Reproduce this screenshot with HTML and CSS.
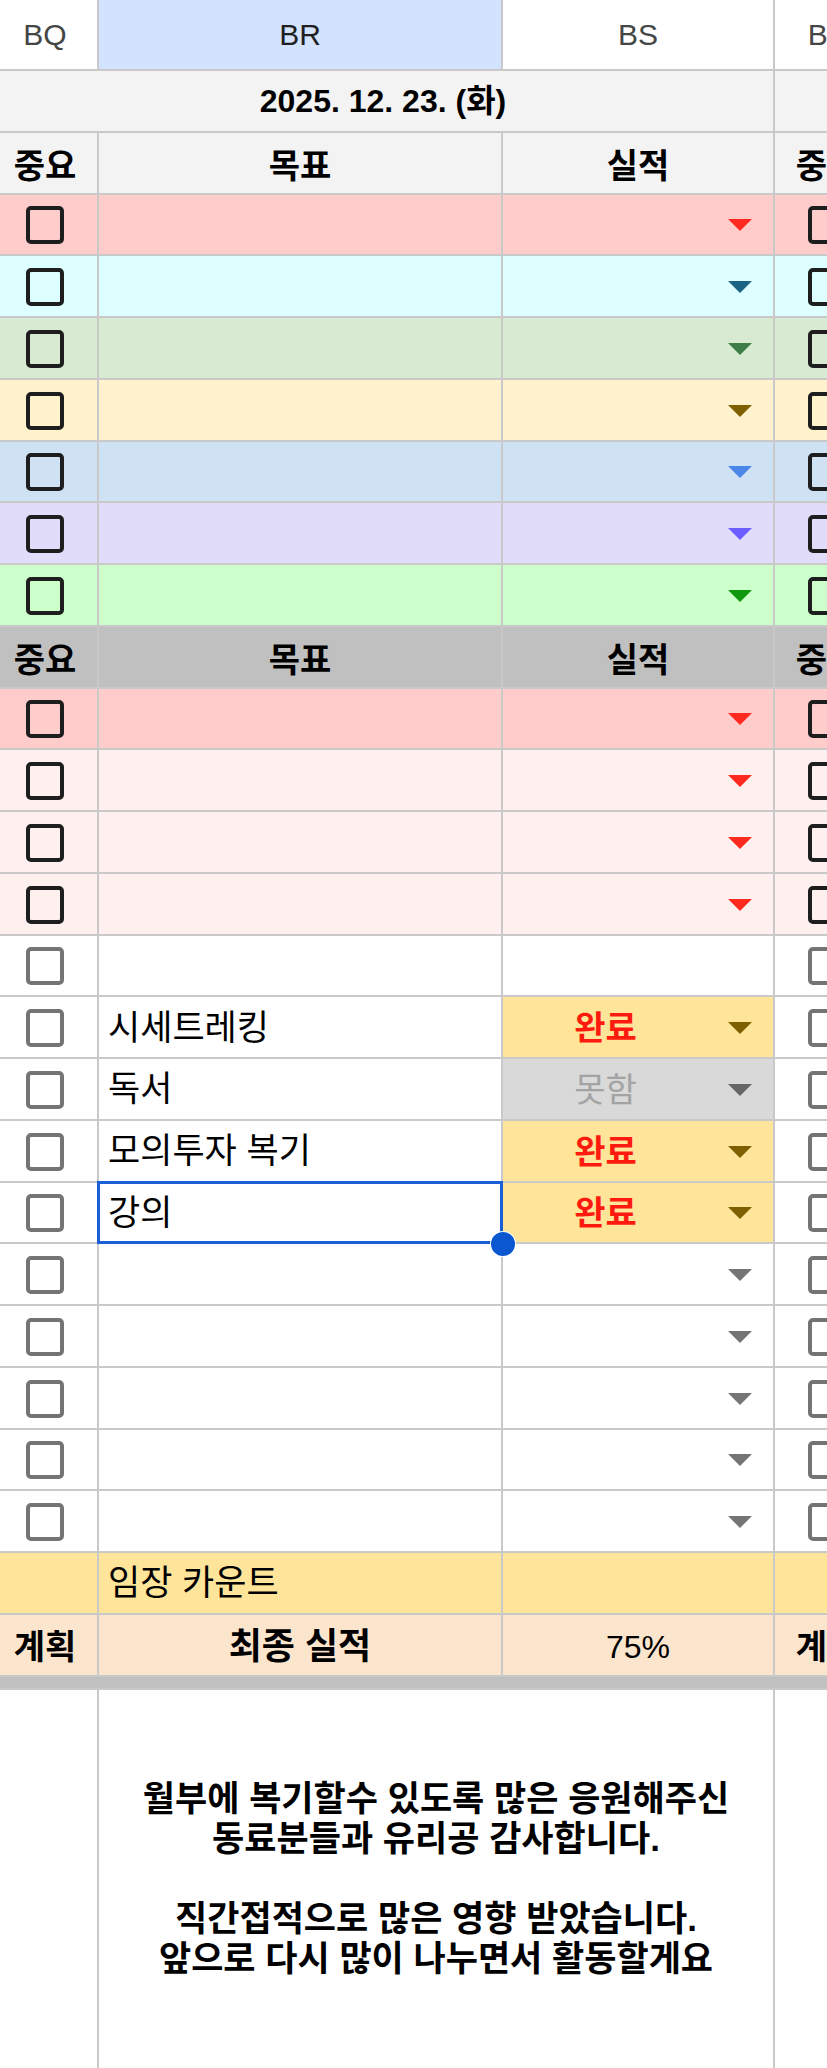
FILE: index.html
```html
<!DOCTYPE html>
<html lang="ko">
<head>
<meta charset="utf-8">
<title>Sheet</title>
<link rel="stylesheet" href="styles.css">
</head>
<body>
<div class="sheet">
  <div class="c colhead">BQ</div>
  <div class="c colhead sel">BR</div>
  <div class="c colhead">BS</div>
  <div class="c colhead">BT</div>

  <div class="c date span3">2025. 12. 23. (화)</div>
  <div class="c date"></div>

  <div class="c hd">중요</div>
  <div class="c hd">목표</div>
  <div class="c hd">실적</div>
  <div class="c hd">중요</div>

  <div class="c r1"><span class="cb"></span></div><div class="c r1"></div><div class="c r1 dd"><span class="tri a1"></span></div><div class="c r1"><span class="cb"></span></div>
  <div class="c r2"><span class="cb"></span></div><div class="c r2"></div><div class="c r2 dd"><span class="tri a2"></span></div><div class="c r2"><span class="cb"></span></div>
  <div class="c r3"><span class="cb"></span></div><div class="c r3"></div><div class="c r3 dd"><span class="tri a3"></span></div><div class="c r3"><span class="cb"></span></div>
  <div class="c r4"><span class="cb"></span></div><div class="c r4"></div><div class="c r4 dd"><span class="tri a4"></span></div><div class="c r4"><span class="cb"></span></div>
  <div class="c r5"><span class="cb"></span></div><div class="c r5"></div><div class="c r5 dd"><span class="tri a5"></span></div><div class="c r5"><span class="cb"></span></div>
  <div class="c r6"><span class="cb"></span></div><div class="c r6"></div><div class="c r6 dd"><span class="tri a6"></span></div><div class="c r6"><span class="cb"></span></div>
  <div class="c r7"><span class="cb"></span></div><div class="c r7"></div><div class="c r7 dd"><span class="tri a7"></span></div><div class="c r7"><span class="cb"></span></div>

  <div class="c hd2">중요</div>
  <div class="c hd2">목표</div>
  <div class="c hd2">실적</div>
  <div class="c hd2">중요</div>

  <div class="c r1"><span class="cb"></span></div><div class="c r1"></div><div class="c r1 dd"><span class="tri a1"></span></div><div class="c r1"><span class="cb"></span></div>
  <div class="c rp"><span class="cb"></span></div><div class="c rp"></div><div class="c rp dd"><span class="tri a1"></span></div><div class="c rp"><span class="cb"></span></div>
  <div class="c rp"><span class="cb"></span></div><div class="c rp"></div><div class="c rp dd"><span class="tri a1"></span></div><div class="c rp"><span class="cb"></span></div>
  <div class="c rp"><span class="cb"></span></div><div class="c rp"></div><div class="c rp dd"><span class="tri a1"></span></div><div class="c rp"><span class="cb"></span></div>

  <div class="c w"><span class="cb gray"></span></div><div class="c w"></div><div class="c w"></div><div class="c w"><span class="cb gray"></span></div>

  <div class="c w"><span class="cb gray"></span></div><div class="c w txt">시세트레킹</div><div class="c done dd"><span class="val">완료</span><span class="tri ab"></span></div><div class="c w"><span class="cb gray"></span></div>
  <div class="c w"><span class="cb gray"></span></div><div class="c w txt">독서</div><div class="c miss dd"><span class="val">못함</span><span class="tri ag"></span></div><div class="c w"><span class="cb gray"></span></div>
  <div class="c w"><span class="cb gray"></span></div><div class="c w txt">모의투자 복기</div><div class="c done dd"><span class="val">완료</span><span class="tri ab"></span></div><div class="c w"><span class="cb gray"></span></div>
  <div class="c w"><span class="cb gray"></span></div><div class="c w txt selected">강의<span class="handle"></span></div><div class="c done dd"><span class="val">완료</span><span class="tri ab"></span></div><div class="c w"><span class="cb gray"></span></div>

  <div class="c w"><span class="cb gray"></span></div><div class="c w"></div><div class="c w dd"><span class="tri ae"></span></div><div class="c w"><span class="cb gray"></span></div>
  <div class="c w"><span class="cb gray"></span></div><div class="c w"></div><div class="c w dd"><span class="tri ae"></span></div><div class="c w"><span class="cb gray"></span></div>
  <div class="c w"><span class="cb gray"></span></div><div class="c w"></div><div class="c w dd"><span class="tri ae"></span></div><div class="c w"><span class="cb gray"></span></div>
  <div class="c w"><span class="cb gray"></span></div><div class="c w"></div><div class="c w dd"><span class="tri ae"></span></div><div class="c w"><span class="cb gray"></span></div>
  <div class="c w"><span class="cb gray"></span></div><div class="c w"></div><div class="c w dd"><span class="tri ae"></span></div><div class="c w"><span class="cb gray"></span></div>

  <div class="c ylw"></div><div class="c ylw txt">임장 카운트</div><div class="c ylw"></div><div class="c ylw"></div>

  <div class="c peach bold">계획</div><div class="c peach bold wide">최종 실적</div><div class="c peach pct">75%</div><div class="c peach bold">계획</div>

  <div class="bar"></div>

  <div class="c w"></div>
  <div class="c w span2 msg">월부에 복기할수 있도록 많은 응원해주신<br>동료분들과 유리공 감사합니다.<br><br>직간접적으로 많은 영향 받았습니다.<br>앞으로 다시 많이 나누면서 활동할게요</div>
  <div class="c w"></div>
</div>
</body>
</html>
```

FILE: styles.css
```css
html, body {
  margin: 0;
  padding: 0;
  overflow: hidden;
  background: #ffffff;
}

body {
  width: 827px;
  height: 2068px;
  font-family: "Liberation Sans", "Noto Sans CJK KR", sans-serif;
  color: #000;
}

.sheet {
  display: grid;
  grid-template-columns: 104px 402px 270px 104px;
  grid-template-rows: 69px repeat(26, 59.76px) 11px 378px;
  gap: 2px;
  background: #c9c9c9;
  margin-left: -7px;
  width: max-content;
}

.c {
  display: flex;
  align-items: center;
  justify-content: center;
  min-width: 0;
  overflow: visible;
  font-size: 34px;
  line-height: 1;
  white-space: nowrap;
}

.span3 { grid-column: 1 / 4; }
.span2 { grid-column: 2 / 4; }

.colhead {
  background: #ffffff;
  color: #444746;
  font-size: 30px;
}

.colhead.sel {
  background: #d3e3fd;
  color: #1f1f1f;
}

.date {
  background: #f3f3f3;
  font-weight: 700;
  font-size: 32px;
}

.hd {
  background: #f3f3f3;
  font-weight: 700;
  padding-top: 6px;
}

.hd2 {
  background: #c0c0c0;
  font-weight: 700;
  padding-top: 6px;
}

.r1 { background: #ffcccc; }
.r2 { background: #ddffff; }
.r3 { background: #d9ead3; }
.r4 { background: #fff2cc; }
.r5 { background: #cfe2f3; }
.r6 { background: #e2dcfb; }
.r7 { background: #ccffcc; }
.rp { background: #fff0f0; }
.w { background: #ffffff; }
.ylw { background: #ffe599; }
.peach { background: #fce5cd; }
.done { background: #ffe599; }
.miss { background: #d9d9d9; }

.bar { grid-column: 1 / 5; background: #c0c0c0; }

.cb {
  display: block;
  width: 38px;
  height: 38px;
  box-sizing: border-box;
  border: 4px solid #1e1e1e;
  border-radius: 5px;
  margin-top: 2px;
}

.cb.gray {
  border-color: #747474;
}

.dd {
  justify-content: flex-end;
  padding-right: 21px;
}

.val {
  flex: 1;
  text-align: center;
  margin-right: 20px;
  font-weight: 700;
  padding-top: 2px;
}

.done .val { color: #ff1a0f; }
.miss .val { color: #a3a3a3; font-weight: 400; }

.tri {
  display: block;
  width: 0;
  height: 0;
  border-left: 12px solid transparent;
  border-right: 12px solid transparent;
  border-top: 12px solid #757575;
  margin-top: 2px;
}

.a1 { border-top-color: #ff2a1f; }
.a2 { border-top-color: #1d6383; }
.a3 { border-top-color: #3f7d46; }
.a4 { border-top-color: #7f6000; }
.a5 { border-top-color: #4a86e8; }
.a6 { border-top-color: #6a5cff; }
.a7 { border-top-color: #10990f; }
.ab { border-top-color: #7f6000; }
.ag { border-top-color: #666666; }
.ae { border-top-color: #757575; }

.txt {
  justify-content: flex-start;
  padding-left: 9px;
  font-size: 35px;
}

.selected {
  position: relative;
  z-index: 2;
}

.selected::after {
  content: "";
  position: absolute;
  inset: -2px;
  border: 3px solid #1a5fd6;
  pointer-events: none;
}

.handle {
  position: absolute;
  right: -14px;
  bottom: -14px;
  width: 24px;
  height: 24px;
  border-radius: 50%;
  background: #0b57d0;
  box-shadow: 0 0 0 1px #ffffff;
  z-index: 3;
}

.bold { font-weight: 700; padding-top: 4px; }
.bold.wide { font-size: 36px; }

.pct {
  font-size: 32px;
  padding-top: 4px;
}

.msg {
  align-items: flex-start;
  text-align: center;
  font-weight: 700;
  font-size: 35px;
  line-height: 40px;
  padding-top: 89px;
  box-sizing: border-box;
}
```
